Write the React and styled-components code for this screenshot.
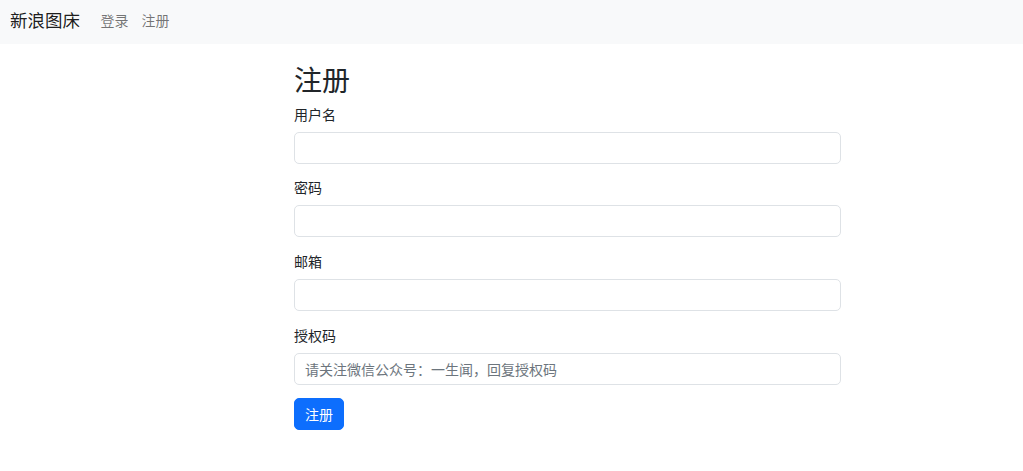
import React from 'react';
import styled, { createGlobalStyle } from 'styled-components';

const GlobalStyle = createGlobalStyle`
  html, body {
    margin: 0;
    padding: 0;
    background: #fff;
  }
  body {
    font-family: "Noto Sans CJK SC", "Noto Sans", "Liberation Sans", sans-serif;
    font-size: 14px;
    line-height: 1.5;
    color: #212529;
  }
  * {
    box-sizing: border-box;
  }
`;

const Navbar = styled.nav`
  display: flex;
  align-items: center;
  height: 44px;
  padding: 0 10px 4px;
  background: #f8f9fa;
`;

const Brand = styled.a`
  font-size: 17.5px;
  color: rgba(0, 0, 0, 0.9);
  text-decoration: none;
  margin-right: 14px;
`;

const NavLink = styled.a`
  padding: 0 6.5px;
  color: rgba(0, 0, 0, 0.55);
  text-decoration: none;
`;

const Main = styled.main`
  padding-left: 294px;
`;

const Form = styled.form`
  width: 547px;
`;

const Title = styled.h1`
  font-size: 28px;
  font-weight: 400;
  line-height: 1.2;
  margin: 19px 0 7px;
`;

const Field = styled.div`
  margin-bottom: 13.7px;
`;

const Label = styled.label`
  display: block;
  margin-bottom: 7px;
`;

const Input = styled.input`
  display: block;
  width: 100%;
  height: 32px;
  padding: 5px 10px;
  font: inherit;
  font-size: 14px;
  color: #212529;
  background: #fff;
  border: 1px solid #dee2e6;
  border-radius: 5px;
  outline: none;
  &::placeholder {
    color: #6c757d;
  }
`;

const Button = styled.button`
  height: 32px;
  padding: 0 10px;
  font: inherit;
  font-size: 14px;
  color: #fff;
  background: #0d6efd;
  border: 1px solid #0d6efd;
  border-radius: 5px;
`;

const fields = [
  { name: 'username', label: '用户名', type: 'text' },
  { name: 'password', label: '密码', type: 'password' },
  { name: 'email', label: '邮箱', type: 'email' },
  { name: 'code', label: '授权码', type: 'text', placeholder: '请关注微信公众号：一生闻，回复授权码' },
];

export default function App() {
  return (
    <>
      <GlobalStyle />
      <Navbar>
        <Brand href="#">新浪图床</Brand>
        <NavLink href="#">登录</NavLink>
        <NavLink href="#">注册</NavLink>
      </Navbar>
      <Main>
        <Form onSubmit={e => e.preventDefault()}>
          <Title>注册</Title>
          {fields.map(f => (
            <Field key={f.name}>
              <Label htmlFor={f.name}>{f.label}</Label>
              <Input id={f.name} name={f.name} type={f.type} placeholder={f.placeholder} />
            </Field>
          ))}
          <Button type="submit">注册</Button>
        </Form>
      </Main>
    </>
  );
}
